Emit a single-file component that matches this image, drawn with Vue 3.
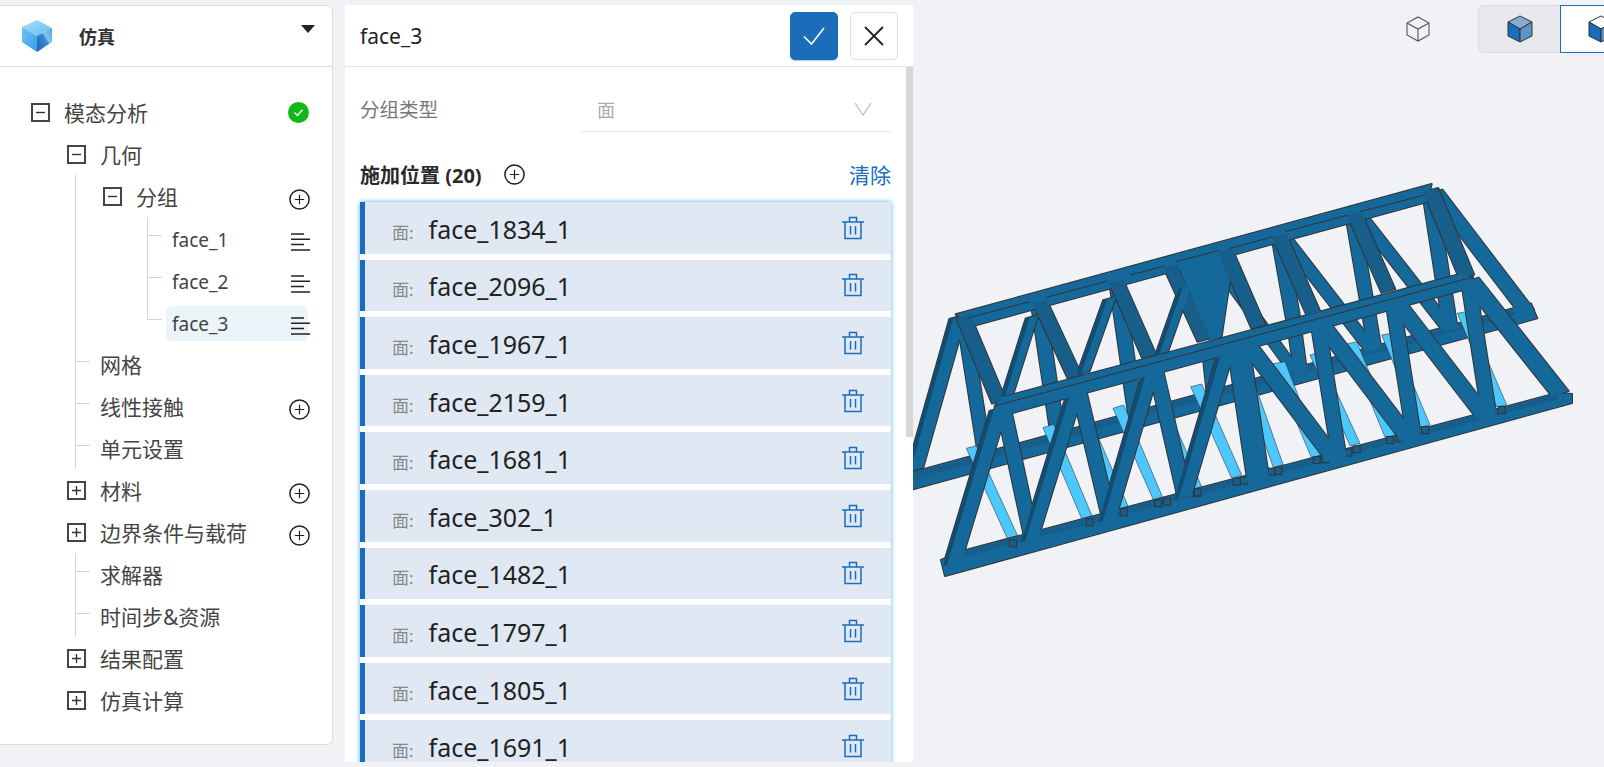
<script setup>
const rows = [
  { label: '模态分析', lv: 0, box: 'minus', end: 'ok' },
  { label: '几何', lv: 1, box: 'minus' },
  { label: '分组', lv: 2, box: 'minus', end: 'plus', g: true },
  { label: 'face_1', lv: 3, end: 'lines', g: true, g3: true, dash3: true },
  { label: 'face_2', lv: 3, end: 'lines', g: true, g3: true, dash3: true },
  { label: 'face_3', lv: 3, end: 'lines', g: true, g3: 'last', dash3: true, sel: true },
  { label: '网格', lv: 1, g: true, dash: true },
  { label: '线性接触', lv: 1, end: 'plus', g: true, dash: true },
  { label: '单元设置', lv: 1, g: true, dash: true },
  { label: '材料', lv: 1, box: 'plus', end: 'plus' },
  { label: '边界条件与载荷', lv: 1, box: 'plus', end: 'plus' },
  { label: '求解器', lv: 1, g: true, dash: true },
  { label: '时间步&资源', lv: 1, g: true, dash: true },
  { label: '结果配置', lv: 1, box: 'plus' },
  { label: '仿真计算', lv: 1, box: 'plus' }
]
const faces = ['face_1834_1', 'face_2096_1', 'face_1967_1', 'face_2159_1', 'face_1681_1', 'face_302_1', 'face_1482_1', 'face_1797_1', 'face_1805_1', 'face_1691_1']

// Truss geometry measured on three crops of the reference (3x scale, crop origin relative to the canvas).
const C = { a: [0, 280], b: [217, 180], c: [387, 180] }
const pt = (k, x, y) => [C[k][0] + x / 3, C[k][1] + y / 3]
const str = (a) => a.map(([x, y]) => `${x.toFixed(1)},${y.toFixed(1)}`).join(' ')
const poly = (k, a) => str(a.map(([x, y]) => pt(k, x, y)))

// A member between two chords: its ends are cut parallel to the chords.
const DX = 0.9645
const DY = -0.2641
function bar(k, x1, y1, x2, y2, width, shade) {
  const w = width * 1.1
  const [ax, ay] = pt(k, x1, y1)
  const [bx, by] = pt(k, x2, y2)
  const len = Math.hypot(bx - ax, by - ay)
  const nx = (by - ay) / len
  const ny = -(bx - ax) / len
  const scale = 1 / Math.abs(DX * nx + DY * ny)
  const t = (w / 2) * scale
  const p = [
    [ax - DX * t, ay - DY * t],
    [bx - DX * t, by - DY * t],
    [bx + DX * t, by + DY * t],
    [ax + DX * t, ay + DY * t]
  ]
  const res = { p: str(p) }
  if (shade) {
    const i = t - 3.6 * scale
    res.s = str([
      [ax - DX * t, ay - DY * t],
      [bx - DX * t, by - DY * t],
      [bx - DX * i, by - DY * i],
      [ax - DX * i, ay - DY * i]
    ])
  }
  return res
}

const beams = [
  ['a', [[160,505],[190,497],[315,770],[285,780]]],
  ['a', [[390,443],[422,433],[540,715],[510,725]]],
  ['a', [[500,420],[530,412],[648,685],[618,692]]],
  ['a', [[600,385],[632,375],[750,655],[722,662]]],
  ['a', [[735,380],[760,375],[868,625],[838,632]]],
  ['b', [[182,620],[215,612],[335,885],[305,895]]],
  ['b', [[340,610],[370,600],[460,855],[430,862]]],
  ['b', [[425,552],[465,545],[575,830],[545,835]]],
  ['b', [[540,525],[565,518],[690,790],[660,797]]],
  ['b', [[650,492],[680,485],[795,765],[765,772]]],
  ['c', [[245,465],[275,460],[390,735],[360,742]]],
  ['c', [[472,400],[500,395],[620,675],[590,680]]]
].map(([k, a]) => poly(k, a))

const farMembers = [
  bar('a',150,110,215,525,12), bar('a',375,70,435,470,13), bar('a',610,5,668,410,13),
  bar('b',235,500,250,640,12),
  bar('b',255,245,495,575,10), bar('b',445,165,490,420,13), bar('b',490,420,512,580,12),
  bar('b',465,175,725,510,11), bar('b',665,100,735,510,12),
  bar('c',175,100,445,445,11), bar('c',390,50,452,450,13),
  bar('c',405,35,680,395,13),
  bar('a',135,110,5,570,14,true)
]
const farChord = str([[0,472],[618,303.5],[624.3,318.3],[0,489.3]])
const farStrip = str([[0,473],[600,309],[602,315],[0,480]])

const crossBars = [
  bar('a',150,108,258,365,13), bar('a',380,65,485,290,13), bar('a',610,5,708,228,13),
  bar('b',120,258,222,480,12), bar('b',285,210,385,440,13), bar('b',447,165,550,400,13),
  bar('b',672,100,775,333,13), bar('c',392,30,500,290,14)
]
const sideBars = [
  bar('a',357,110,283,345,10,true), bar('a',590,55,510,280,10,true), bar('b',165,320,95,520,10,true)
]
const nearBars = [
  bar('a',258,385,118,850,15,true), bar('a',270,375,355,770,13), bar('a',490,325,350,780,14,true),
  bar('a',495,320,590,720,13), bar('a',715,270,583,720,14,true), bar('a',725,255,815,650,13),
  bar('b',292,500,160,950,14,true), bar('b',322,480,385,900,20),
  bar('b',355,495,615,840,14), bar('b',562,420,628,835,13), bar('b',575,432,840,780,14),
  bar('b',788,365,853,780,13), bar('c',285,360,555,710,14), bar('c',505,305,568,710,13),
  bar('c',510,300,780,640,15)
]
const outlined = [...crossBars, ...sideBars, ...nearBars]
const lowerBars = [...sideBars, ...nearBars]
const thick = poly('b', [[140,245],[265,212],[300,300],[275,470],[240,482],[150,270]])
const farTop = str([[42.7,314.3],[518.7,184],[514,202],[60,326]])
const nearTop = str([[81.7,406],[90,397],[547,274],[560,277],[550,290],[96,414],[81.7,416]])
const nearBottom = str([[28,560],[49,551],[644,393],[659,394],[659,403],[32,576]])
const nearStrip = str([[49,551],[644,393],[646,399],[51,557]])
const midLines = [
  ['a',168,113,350,65], ['a',400,52,585,3], ['b',0,285,105,258], ['b',137,245,265,212],
  ['b',300,205,430,170], ['b',465,155,655,105], ['b',690,95,885,45]
].map(([k, x1, y1, x2, y2]) => {
  const a = pt(k, x1, y1)
  const b = pt(k, x2, y2)
  return { x1: a[0], y1: a[1], x2: b[0], y2: b[1] }
})
midLines.push({ x1: 81.7, y1: 406, x2: 560, y2: 277 })
const feet = [
  ['a',300,790],['a',530,727],['a',632,697],['a',735,670],['a',762,665],['a',852,640],
  ['b',203,937],['b',320,905],['b',342,902],['b',425,875],['b',445,873],['b',560,840],['b',585,838],
  ['b',655,818],['b',680,808],['b',780,780],['b',810,775],['b',885,750],
  ['c',375,750],['c',605,690]
].map(([k, x, y]) => {
  const [px, py] = pt(k, x, y)
  return { x: px - 3.5, y: py - 3.5 }
})
</script>

<template>
  <div class="page">
    <aside class="side">
      <header class="side-head">
        <svg class="logo" width="32" height="34" viewBox="0 0 32 34">
          <defs>
            <linearGradient id="lgTop" x1="0" y1="0" x2="1" y2="1">
              <stop offset="0" stop-color="#a6def9" />
              <stop offset="1" stop-color="#66bcf1" />
            </linearGradient>
            <linearGradient id="lgLeft" x1="0" y1="0" x2="1" y2="1">
              <stop offset="0" stop-color="#6cc4f5" />
              <stop offset="1" stop-color="#3e9ce6" />
            </linearGradient>
            <linearGradient id="lgRight" x1="0" y1="1" x2="1" y2="0">
              <stop offset="0" stop-color="#1563b6" />
              <stop offset="0.55" stop-color="#3a8cd6" />
              <stop offset="0.62" stop-color="#86c6ef" />
              <stop offset="1" stop-color="#4da0e2" />
            </linearGradient>
          </defs>
          <path d="M16 1 31 9 16 17 1 8Z" fill="url(#lgTop)" />
          <path d="M1 8 16 17V33L1 23Z" fill="url(#lgLeft)" />
          <path d="M31 9 16 17V33L31 23Z" fill="url(#lgRight)" />
        </svg>
        <span class="side-title">仿真</span>
        <i class="caret"></i>
      </header>
      <div class="tree">
        <div v-for="r in rows" :key="r.label" class="row" :class="'lv' + r.lv">
          <i v-if="r.g" class="guide"></i>
          <i v-if="r.g3" class="guide3" :class="{ last: r.g3 === 'last' }"></i>
          <i v-if="r.dash" class="dash"></i>
          <i v-if="r.dash3" class="dash3"></i>
          <svg v-if="r.box" class="box" width="19" height="19" viewBox="0 0 19 19">
            <rect x="1" y="1" width="17" height="17" fill="none" stroke="#444" stroke-width="2" />
            <path :d="r.box === 'plus' ? 'M5 9.5H14M9.5 5V14' : 'M5 9.5H14'" stroke="#333" stroke-width="1.4" />
          </svg>
          <span class="label" :class="{ selected: r.sel }">{{ r.label }}</span>
          <span v-if="r.end === 'ok'" class="ok">
            <svg width="21" height="21" viewBox="0 0 21 21">
              <circle cx="10.5" cy="10.5" r="10.5" fill="#12b816" />
              <path d="M6.5 10.5 9.5 13.5 14.5 7.8" fill="none" stroke="#fff" stroke-width="1.4" />
            </svg>
          </span>
          <svg v-else-if="r.end === 'plus'" class="end plus" width="21" height="21" viewBox="0 0 21 21">
            <circle cx="10.5" cy="10.5" r="9.6" fill="none" stroke="#222" stroke-width="1.5" />
            <path d="M5.8 10.5H15.2M10.5 5.8V15.2" stroke="#222" stroke-width="1.2" />
          </svg>
          <svg v-else-if="r.end === 'lines'" class="end lines" width="19" height="18" viewBox="0 0 19 18">
            <path d="M0 1H13M0 6.3H19M0 11.6H13M0 17H19" stroke="#222" stroke-width="1.5" />
          </svg>
        </div>
      </div>
    </aside>

    <section class="mid">
      <header class="mid-head">
        <span class="mid-title">face_3</span>
        <button class="btn primary">
          <svg width="24" height="24" viewBox="0 0 24 24"><path d="M2 12.5 9.5 20 22 4" fill="none" stroke="#fff" stroke-width="1.6" /></svg>
        </button>
        <button class="btn">
          <svg width="20" height="20" viewBox="0 0 20 20"><path d="M1 1 19 19M19 1 1 19" fill="none" stroke="#222" stroke-width="1.8" /></svg>
        </button>
      </header>
      <div class="mid-body">
        <div class="field">
          <span class="field-label">分组类型</span>
          <div class="select">
            <span>面</span>
            <svg width="18" height="14" viewBox="0 0 18 14"><path d="M1 1 9 13 17 1" fill="none" stroke="#bbb" stroke-width="1.2" /></svg>
          </div>
        </div>
        <div class="section">
          <b class="section-title">施加位置 (20)</b>
          <svg width="21" height="21" viewBox="0 0 21 21">
            <circle cx="10.5" cy="10.5" r="9.6" fill="none" stroke="#222" stroke-width="1.5" />
            <path d="M5.8 10.5H15.2M10.5 5.8V15.2" stroke="#222" stroke-width="1.2" />
          </svg>
          <a class="clear">清除</a>
        </div>
        <ul class="list">
          <li v-for="f in faces" :key="f" class="item">
            <span class="kind">面:</span>
            <span class="name">{{ f }}</span>
            <svg class="trash" width="22" height="24" viewBox="0 0 22 24">
              <path d="M0 6H22M7.5 6V1.5H14.5V6M3 6V22.5H19V6M8.5 10V18.5M13.5 10V18.5" fill="none" stroke="#1b6cbb" stroke-width="1.5" />
            </svg>
          </li>
        </ul>
      </div>
      <i class="thumb"></i>
    </section>

    <main class="canvas">
      <svg class="truss" width="691" height="767" viewBox="0 0 691 767">
        <!-- far truss -->
        <polygon v-for="(b, i) in farMembers" :key="'fo' + i" :points="b.p" class="outline" />
        <polygon :points="farChord" class="outline" />
        <polygon :points="farChord" class="steel" />
        <polygon :points="farStrip" class="dark" />
        <template v-for="(b, i) in farMembers" :key="'ff' + i">
          <polygon :points="b.p" class="steel" />
          <polygon v-if="b.s" :points="b.s" class="shade" />
        </template>
        <!-- cross beams -->
        <polygon v-for="(b, i) in beams" :key="'b' + i" :points="b" class="beam" />
        <!-- top plane and near truss -->
        <polygon v-for="(b, i) in outlined" :key="'no' + i" :points="b.p" class="outline" />
        <polygon :points="thick" class="outline" />
        <polygon :points="farTop" class="outline" />
        <polygon :points="nearTop" class="outline" />
        <polygon :points="nearBottom" class="outline" />
        <polygon :points="nearBottom" class="steel" />
        <polygon :points="nearStrip" class="dark" />
        <rect v-for="(f, i) in feet" :key="'k' + i" :x="f.x" :y="f.y" width="7" height="7" class="foot" />
        <polygon :points="farTop" class="steel" />
        <polygon :points="thick" class="steel" />
        <polygon v-for="(b, i) in crossBars" :key="'x' + i" :points="b.p" class="dark" />
        <template v-for="(b, i) in lowerBars" :key="'nf' + i">
          <polygon :points="b.p" class="steel" />
          <polygon v-if="b.s" :points="b.s" class="shade" />
        </template>
        <polygon :points="nearTop" class="steel" />
        <line v-for="(l, i) in midLines" :key="'m' + i" :x1="l.x1" :y1="l.y1" :x2="l.x2" :y2="l.y2" class="mid-line" />
      </svg>
      <svg class="view-iso" width="26" height="28" viewBox="0 0 26 28">
        <path d="M13 2 24 8V20L13 26 2 20V8ZM2 8 13 14 24 8M13 14V26" fill="none" stroke="#555" stroke-width="1.1" />
      </svg>
      <div class="seg">
        <div class="seg-a">
          <svg width="28" height="30" viewBox="0 0 28 30">
            <path d="M14 2 26 8 14 15 2 8Z" fill="#84add6" stroke="#333" />
            <path d="M2 8 14 15V28L2 22Z" fill="#1b6cbb" stroke="#333" />
            <path d="M26 8 14 15V28L26 22Z" fill="#5c93c9" stroke="#333" />
          </svg>
        </div>
        <div class="seg-b">
          <svg width="28" height="30" viewBox="0 0 28 30">
            <path d="M14 2 26 8 14 15 2 8Z" fill="#fff" stroke="#333" />
            <path d="M2 8 14 15V28L2 22Z" fill="#1b6cbb" stroke="#333" />
            <path d="M26 8 14 15V28L26 22Z" fill="#5c93c9" stroke="#333" />
          </svg>
        </div>
      </div>
    </main>
  </div>
</template>

<style>
html, body { margin: 0; background: #f0f2f6; overflow: hidden; }
</style>

<style scoped>
.page {
  display: flex;
  height: 767px;
  width: 1604px;
  overflow: hidden;
  background: #f0f2f6;
  font-family: "Noto Sans", "Noto Sans CJK SC", sans-serif;
  color: #222;
}
.side {
  width: 333px;
  height: 740px;
  margin-top: 5px;
  box-sizing: border-box;
  background: #fff;
  border: 1px solid #dcdcdc;
  border-left: 0;
  border-radius: 0 6px 6px 0;
  flex: none;
}
.side-head {
  height: 61px;
  display: flex;
  align-items: center;
  padding-left: 21px;
  position: relative;
  border-bottom: 1px solid #dcdcdc;
  box-sizing: border-box;
}
.side-title { margin-left: 26px; font-size: 18px; font-weight: 700; color: #333; font-family: "Noto Sans CJK SC", sans-serif; }
.caret {
  position: absolute;
  right: 17px;
  top: 19px;
  border: 7px solid transparent;
  border-top: 8px solid #222;
  border-bottom: 0;
}
.tree { padding-top: 24px; }
.row {
  height: 42px;
  display: flex;
  align-items: center;
  position: relative;
  padding-right: 22px;
  font-size: 21px;
  color: #444;
}
.lv0 { padding-left: 31px; }
.lv1 { padding-left: 67px; }
.lv2 { padding-left: 103px; }
.lv3 { padding-left: 172px; font-size: 19px; z-index: 0; }
.lv3 .label { top: 2px; }
.box { flex: none; margin-right: 14px; }
.lv1:not(:has(.box)) { padding-left: 100px; }
.label { position: relative; white-space: nowrap; }
.label.selected::before {
  content: "";
  position: absolute;
  left: -6px;
  width: 142px;
  top: -5px;
  bottom: -4px;
  background: #eaf4f9;
  border-radius: 6px;
  z-index: -1;
}
.ok, .end { margin-left: auto; flex: none; }
.ok { height: 21px; margin-right: 1px; margin-top: -1px; }
.plus { margin-top: 7px; }
.lines { margin-top: 7px; }
.guide { position: absolute; left: 75px; top: 0; bottom: 0; border-left: 1px solid #d4d4d4; }
.guide3 { position: absolute; left: 147px; top: 0; bottom: 0; border-left: 1px solid #d4d4d4; }
.guide3.last { bottom: 23px; }
.dash { position: absolute; left: 75px; width: 15px; top: 18px; border-top: 1px solid #d4d4d4; }
.dash3 { position: absolute; left: 147px; width: 15px; top: 18px; border-top: 1px solid #d4d4d4; }

.mid {
  width: 568px;
  height: 757px;
  margin: 5px 0 0 12px;
  background: #fff;
  flex: none;
  position: relative;
  overflow: hidden;
  display: flex;
  flex-direction: column;
}
.mid-head {
  height: 62px;
  flex: none;
  display: flex;
  align-items: center;
  gap: 12px;
  padding: 0 15px;
  border-bottom: 1px solid #e4e4e4;
  box-sizing: border-box;
}
.mid-title { font-size: 21px; margin-right: auto; color: #222; }
.btn {
  width: 48px;
  height: 48px;
  padding: 0;
  margin-top: 1px;
  border: 1px solid #ddd;
  border-radius: 5px;
  background: #fff;
  display: flex;
  align-items: center;
  justify-content: center;
}
.btn.primary { background: #1b6cbb; border-color: #1b6cbb; box-shadow: 0 1px 1px #a9d2ee; }
.mid-body { padding: 18px 22px 0 15px; flex: 1; min-height: 0; }
.field { display: flex; height: 47px; }
.field-label { width: 221px; font-size: 19.5px; color: #777; line-height: 50px; flex: none; }
.select {
  flex: 1;
  border-bottom: 1px solid #e2e2e2;
  display: flex;
  align-items: center;
  justify-content: space-between;
  padding: 2px 19px 0 16px;
  font-size: 18px;
  color: #aaa;
}
.section { display: flex; align-items: center; margin-top: 25px; height: 34px; gap: 22px; }
.section-title { font-size: 20px; font-weight: 700; color: #2a2a2a; }
.clear { margin-left: auto; font-size: 21px; color: #1b6cbb; }
.list {
  list-style: none;
  margin: 11px 0 0;
  padding: 0;
  display: flex;
  flex-direction: column;
  gap: 6px;
  box-shadow: 0 0 5px #54b4ea;
  background: #fff;
}
.item {
  height: 51.6px;
  flex: none;
  box-sizing: border-box;
  background: #dfe8f3;
  border-left: 5px solid #1b6cbb;
  display: flex;
  align-items: center;
  padding: 0 27px;
}
.kind { font-size: 17px; color: #888; margin: 7px 15px 0 0; }
.name { font-size: 25px; color: #222; margin-top: 2px; }
.trash { margin-left: auto; }
.thumb {
  position: absolute;
  right: 0;
  top: 62px;
  height: 370px;
  width: 7px;
  background: #d8d8d8;
}

.canvas { flex: 1; position: relative; overflow: hidden; }
.truss { position: absolute; left: 0; top: 0; }
.outline { fill: #333; stroke: #333; stroke-width: 2; stroke-linejoin: round; }
.steel { fill: #15689a; }
.dark { fill: #175f8a; }
.shade { fill: #124c70; }
.beam { fill: #4cc8ff; stroke: #2d3a42; stroke-width: 0.6; }
.foot { fill: #175f8a; stroke: #333; stroke-width: 1; }
.mid-line { stroke: #333; stroke-width: 1; }
.view-iso { position: absolute; left: 492px; top: 15px; }
.seg {
  position: absolute;
  left: 565px;
  top: 5px;
  height: 48px;
  display: flex;
}
.seg-a {
  width: 82px;
  box-sizing: border-box;
  background: #e7e8eb;
  border: 1px solid #dcdcdc;
  border-right: 0;
  border-radius: 6px 0 0 6px;
  display: flex;
  align-items: center;
  justify-content: center;
}
.seg-b {
  width: 82px;
  box-sizing: border-box;
  background: #fff;
  border: 1px solid #1b6cbb;
  display: flex;
  align-items: center;
  justify-content: center;
}
</style>
